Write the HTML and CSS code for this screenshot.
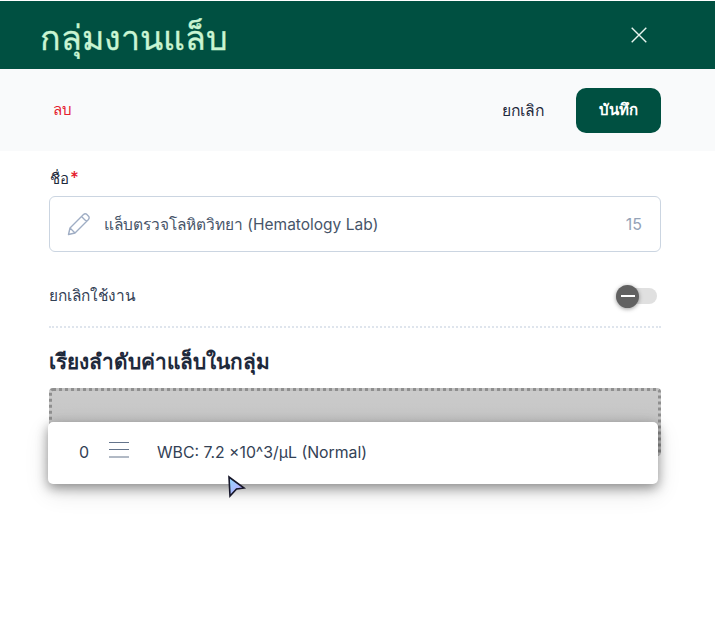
FILE: index.html
```html
<!DOCTYPE html>
<html lang="th">
<head>
<meta charset="utf-8">
<title>กลุ่มงานแล็บ</title>
<link rel="stylesheet" href="styles.css">
</head>
<body>
<div class="panel">
  <header class="hero">
    <h1 class="hero-title">กลุ่มงานแล็บ</h1>
    <button class="close" aria-label="close">
      <svg width="16" height="16" viewBox="0 0 16 16"><path d="M.7.7 15.3 15.3M15.3.7.7 15.3" stroke="#e8f5ef" stroke-width="1.4" fill="none"/></svg>
    </button>
  </header>
  <div class="actions">
    <span class="delete">ลบ</span>
    <div class="actions-right">
      <span class="cancel">ยกเลิก</span>
      <button class="save">บันทึก</button>
    </div>
  </div>
  <main class="form">
    <label class="label">ชื่อ<span class="req">*</span></label>
    <div class="input">
      <svg class="pencil" width="24" height="24" viewBox="0 0 24 24"><path d="M1.5 22.5 3 16 16.5 2.5Q18 1.2 19.6 2.2L21.8 4.4Q22.8 6 21.5 7.5L8 21ZM3 16 8 21M14.5 4.5 19.5 9.5" stroke="#9fadc4" stroke-width="1.4" fill="none" stroke-linejoin="round"/></svg>
      <span class="input-text">แล็บตรวจโลหิตวิทยา (Hematology Lab)</span>
      <span class="count">15</span>
    </div>
    <div class="toggle-row">
      <span class="toggle-label">ยกเลิกใช้งาน</span>
      <span class="toggle"><span class="track"></span><span class="knob"><span class="dash"></span></span></span>
    </div>
    <h2 class="section">เรียงลำดับค่าแล็บในกลุ่ม</h2>
    <div class="dropzone">
      <div class="drag-card">
        <span class="idx">0</span>
        <svg class="grip" width="20" height="18" viewBox="0 0 20 18"><path d="M0 1.5H20M0 8.5H20M0 16H20" stroke="#64748b" stroke-width="1" fill="none"/></svg>
        <span class="item">WBC: 7.2 ×10^3/µL (Normal)</span>
      </div>
    </div>
  </main>
  <svg class="cursor" width="20" height="24" viewBox="0 0 20 24">
    <defs><linearGradient id="g" x1="0" y1="0" x2="1" y2="1"><stop offset="0" stop-color="#8fdcff"/><stop offset="1" stop-color="#c79bff"/></linearGradient></defs>
    <path d="M2 2 17 13 9.5 14 3 21Z" fill="url(#g)" stroke="#17172a" stroke-width="1.6" stroke-linejoin="miter"/>
  </svg>
</div>
</body>
</html>
```
FILE: styles.css
```css
* { box-sizing: border-box; }
html, body { margin: 0; height: 100%; background: #fff; }
body { font-family: "Inter", "Noto Sans", "Liberation Sans", sans-serif; color: #1e293b; overflow: hidden; }
.panel { position: relative; width: 715px; height: 625px; padding-top: 1px; }
.hero { height: 68px; background: #005041; display: flex; align-items: center; justify-content: space-between; padding: 0 68px 0 40px; }
.hero-title { margin: 0; padding-top: 6px; font-size: 34px; font-weight: 400; line-height: 1; color: #c9f5d3; -webkit-text-stroke: .3px #c9f5d3; }
.close { background: none; border: 0; padding: 0; display: flex; margin-bottom: 1px; }
.actions { height: 82px; background: #f9fafb; display: flex; align-items: center; justify-content: space-between; padding: 0 54px 0 53px; }
.delete { font-size: 15px; color: #e5202e; }
.actions-right { display: flex; align-items: center; gap: 32px; }
.cancel { font-size: 15.7px; color: #1e293b; font-weight: 500; }
.save { width: 85px; height: 45px; border: 0; border-radius: 10px; background: #005041; color: #fff; font: 600 15px "Inter", "Noto Sans", sans-serif; }
.form { padding: 18px 54px 0 49px; display: flex; flex-direction: column; }
.label { font-size: 15px; line-height: 20px; padding-left: 1px; font-weight: 500; color: #1e293b; }
.req { color: #e5202e; margin-left: 1px; font-size: 17px; line-height: 0; }
.input { margin-top: 7px; height: 56px; border: 1px solid #cbd5e1; border-radius: 6px; display: flex; align-items: center; padding: 0 18px 0 17px; background: #fff; }
.pencil { flex: none; }
.input-text { margin-left: 13px; font-size: 15.5px; color: #475569; flex: 1; }
.count { font-size: 16px; color: #94a3b8; }
.toggle-row { height: 76px; padding-top: 13px; border-bottom: 2px dotted #dfe5ed; display: flex; align-items: center; justify-content: space-between; }
.toggle-label { font-size: 15.4px; color: #334155; }
.toggle { position: relative; width: 41px; height: 16px; margin-right: 4px; }
.track { position: absolute; inset: 0; background: #e0e0e0; border-radius: 8px; }
.knob { position: absolute; left: 0; top: -3px; width: 23px; height: 23px; border-radius: 50%; background: #616161; box-shadow: 0 1px 4px rgba(0,0,0,.4); display: flex; align-items: center; justify-content: center; }
.dash { width: 14px; height: 2px; background: #fff; }
.section { margin: 21px 0 0; font-size: 20.8px; line-height: 26px; font-weight: 600; color: #1e293b; }
.dropzone { position: relative; margin-top: 13px; height: 68px; border: 3px dotted #8f8f8f; border-radius: 4px; background: linear-gradient(#cbcbcb, #bfbfbf); }
.drag-card { position: absolute; left: -4px; top: 31px; width: 610px; height: 62px; background: #fff; border-radius: 5px; display: flex; align-items: center; padding: 0 0 2px 31px; box-shadow: 0 4px 12px rgba(0,0,0,.4), 0 8px 24px rgba(0,0,0,.12); }
.idx { font-size: 16px; color: #334155; width: 30px; }
.grip { flex: none; margin-bottom: 4px; }
.item { margin-left: 28px; font-size: 15.8px; color: #334155; }
.cursor { position: absolute; left: 227px; top: 475px; }
```
